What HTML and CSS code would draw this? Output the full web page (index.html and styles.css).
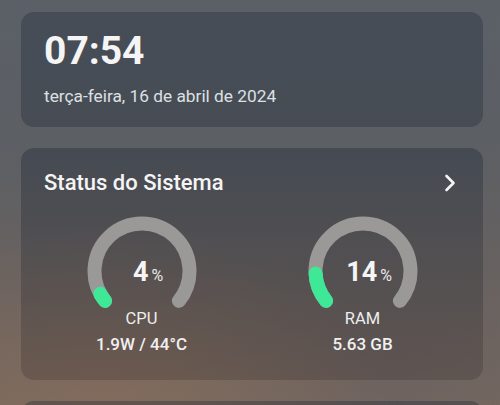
FILE: index.html
```html
<!DOCTYPE html>
<html lang="pt">
<head>
<meta charset="utf-8">
<title>Painel</title>
<link rel="stylesheet" href="styles.css">
</head>
<body>
<main class="stack">
  <section class="card clock-card">
    <div class="time">07:54</div>
    <div class="date">terça-feira, 16 de abril de 2024</div>
  </section>

  <section class="card status-card">
    <header class="status-head">
      <h2 class="status-title">Status do Sistema</h2>
      <svg class="chev" width="14" height="18" viewBox="0 0 14 18" aria-hidden="true">
        <path d="M3.5 2 L10.5 9 L3.5 16" fill="none" stroke="#f4f4f4" stroke-width="2.6" stroke-linecap="round" stroke-linejoin="round"/>
      </svg>
    </header>
    <div class="gauges">
      <div class="gauge-item">
        <div class="gauge">
          <svg class="ring" width="110" height="110" viewBox="0 0 110 110" aria-hidden="true">
            <path d="M18.09 84.89 A47.5 47.5 0 1 1 91.91 84.89" class="track"/>
            <path d="M18.09 84.89 A47.5 47.5 0 0 1 13.34 77.81" class="fill"/>
          </svg>
          <div class="gauge-text">
            <div class="value">4<span class="pct">%</span></div>
            <div class="label">CPU</div>
          </div>
        </div>
        <div class="detail">1.9W / 44°C</div>
      </div>
      <div class="gauge-item">
        <div class="gauge">
          <svg class="ring" width="110" height="110" viewBox="0 0 110 110" aria-hidden="true">
            <path d="M18.09 84.89 A47.5 47.5 0 1 1 91.91 84.89" class="track"/>
            <path d="M18.09 84.89 A47.5 47.5 0 0 1 7.56 57.40" class="fill"/>
          </svg>
          <div class="gauge-text">
            <div class="value">14<span class="pct">%</span></div>
            <div class="label">RAM</div>
          </div>
        </div>
        <div class="detail">5.63 GB</div>
      </div>
    </div>
  </section>

  <section class="card next-card"></section>
</main>
</body>
</html>
```

FILE: styles.css
```css
html, body {
  margin: 0;
  height: 100%;
}

body {
  font-family: Roboto, "Liberation Sans", sans-serif;
  color: #f3f3f3;
  overflow: hidden;
  background:
    radial-gradient(ellipse 60% 45% at 20% 100%, rgba(140, 110, 90, 0.55), rgba(140, 110, 90, 0) 100%),
    radial-gradient(ellipse 40% 35% at 75% 95%, rgba(100, 92, 95, 0.4), rgba(100, 92, 95, 0) 100%),
    linear-gradient(to bottom, #5b6067 0%, #5c5f64 35%, #686260 70%, #75685f 100%);
}

.stack {
  display: flex;
  flex-direction: column;
  gap: 21px;
  padding: 12px 17px 0 21px;
}

.card {
  border-radius: 13px;
  background: rgba(22, 34, 50, 0.3);
}

.clock-card {
  padding: 16px 23px 21px;
  display: flex;
  flex-direction: column;
  gap: 12px;
  background: rgba(28, 38, 52, 0.32);
}

.time {
  font-size: 39px;
  font-weight: 700;
  line-height: 46px;
  color: #f5f5f5;
}

.date {
  font-size: 17.3px;
  line-height: 20px;
  color: #dde0e3;
}

.status-card {
  padding: 22px 23px 26px;
  background:
    linear-gradient(to bottom, rgba(30, 40, 54, 0.38) 0%, rgba(35, 38, 46, 0.3) 45%, rgba(40, 30, 30, 0.22) 100%);
}

.status-head {
  display: flex;
  align-items: center;
  justify-content: space-between;
}

.status-title {
  margin: 0;
  font-size: 22px;
  font-weight: 500;
  line-height: 26px;
  color: #f4f4f4;
}

.chev {
  margin-right: 3px;
}

.gauges {
  display: flex;
  justify-content: center;
  gap: 111px;
  margin-top: 20px;
}

.gauge-item {
  display: flex;
  flex-direction: column;
  align-items: center;
  width: 110px;
}

.gauge {
  display: grid;
  width: 110px;
  height: 110px;
}

.gauge > * {
  grid-area: 1 / 1;
}

.track,
.fill {
  fill: none;
  stroke-width: 14;
  stroke-linecap: round;
}

.track {
  stroke: #9b9898;
}

.fill {
  stroke: #3ee896;
}

.gauge-text {
  display: flex;
  flex-direction: column;
  align-items: center;
  padding-top: 40px;
}

.value {
  font-size: 27px;
  font-weight: 700;
  line-height: 32px;
  padding-left: 13px;
  color: #f5f5f5;
}

.pct {
  font-size: 16px;
  font-weight: 400;
  margin-left: 3px;
  color: #e8e8e8;
}

.label {
  margin-top: 17px;
  font-size: 16.5px;
  line-height: 19px;
  color: #ededed;
}

.detail {
  margin-top: 8px;
  font-size: 17px;
  font-weight: 500;
  line-height: 20px;
  color: #f0f0f0;
  white-space: nowrap;
}

.next-card {
  height: 120px;
}
```
